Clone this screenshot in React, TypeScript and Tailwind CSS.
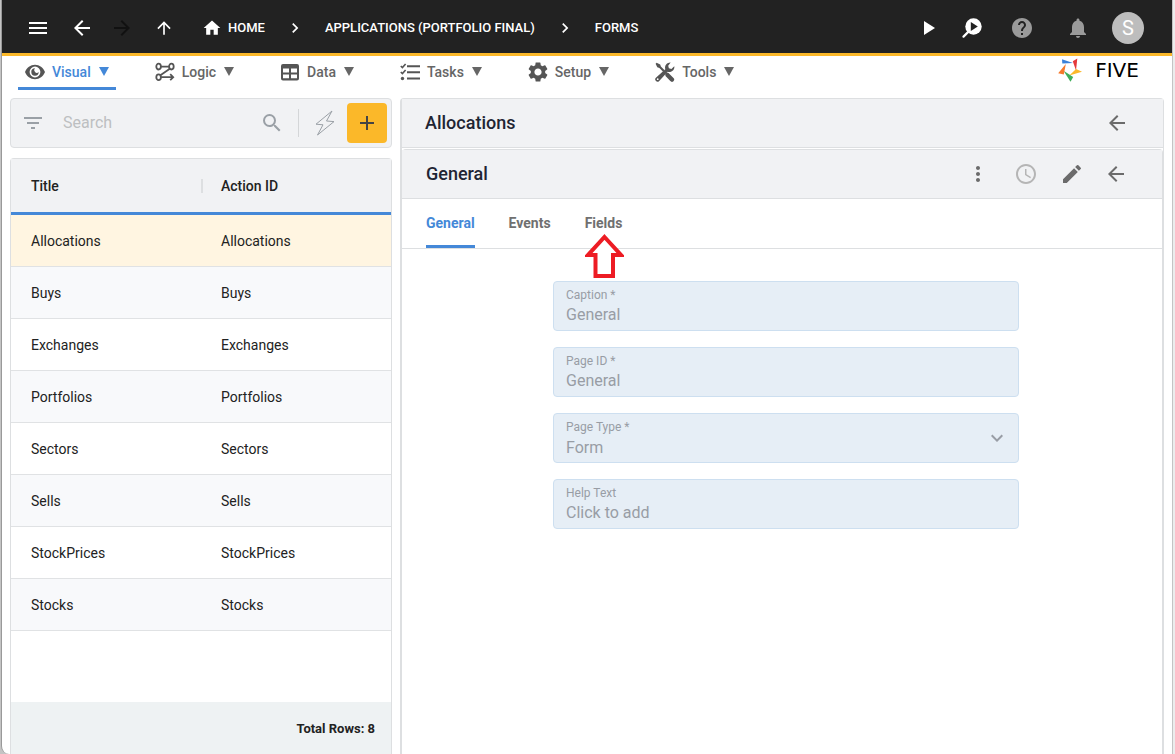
import React, { useState } from 'react';
import {
  MdMenu,
  MdArrowBack,
  MdArrowForward,
  MdArrowUpward,
  MdHome,
  MdChevronRight,
  MdPlayArrow,
  MdHelp,
  MdNotifications,
  MdFilterList,
  MdSearch,
  MdAdd,
  MdMoreVert,
  MdAccessTime,
  MdEdit,
  MdKeyboardArrowDown,
  MdSettings,
} from 'react-icons/md';

type IconProps = { className?: string };

type MenuItem = {
  label: string;
  icon: React.ReactNode;
};

type FieldProps = {
  id: string;
  label: string;
  value: string;
};

// --- Icons ---
const EyeIcon = ({ className }: IconProps) => (
  <svg viewBox="0 0 20 20" className={className} fill="currentColor" fillRule="evenodd">
    <path d="M10 2.800C5.500 2.800 1.700 5.700 0 10c1.700 4.300 5.500 7.200 10 7.200s8.300-2.900 10-7.200c-1.700-4.300-5.500-7.200-10-7.200ZM10 4.600a5.400 5.400 0 1 1 0 10.800 5.400 5.400 0 0 1 0-10.800Z" />
    <path d="M10 6.300A3.700 3.700 0 1 0 13.700 10 2 2 0 0 1 10 6.300Z" />
  </svg>
);

const LogicIcon = ({ className }: IconProps) => (
  <svg viewBox="0 0 20 20" className={className} fill="none" stroke="currentColor" strokeWidth="1.8">
    <ellipse cx="3.6" cy="4.6" rx="2.3" ry="2.9" />
    <ellipse cx="16.4" cy="4.6" rx="2.3" ry="2.9" />
    <ellipse cx="3.6" cy="15.2" rx="2.3" ry="2.9" />
    <path d="M5.9 4.6h8.2M14.8 6.8 5.4 13.2M5.9 15.2h12M15.2 12.2l3 3-3 3" />
  </svg>
);

const DataIcon = ({ className }: IconProps) => (
  <svg viewBox="0 0 20 20" className={className} fill="currentColor" fillRule="evenodd">
    <path d="M3 2h14A2 2 0 0 1 19 4v12.500a2 2 0 0 1-2 2h-14A2 2 0 0 1 1 16.500v-12.500A2 2 0 0 1 3 2ZM3 6.500v4h6v-4ZM11 6.500v4h6v-4ZM3 12.400v3.800h6v-3.800ZM11 12.400v3.800h6v-3.800Z" />
  </svg>
);

const TasksIcon = ({ className }: IconProps) => (
  <svg viewBox="0 0 20 20" className={className} fill="none" stroke="currentColor" strokeWidth="2">
    <path d="M7 4.200h13M7 10.200h13M7 16.500h13" />
    <path strokeWidth="1.600" d="m.8 4 1.600 1.600 3.200-3.600M.8 10l1.600 1.600 3.200-3.600" />
    <circle cx="2.500" cy="16.500" r="1.700" fill="currentColor" stroke="none" />
  </svg>
);

const ToolsIcon = ({ className }: IconProps) => (
  <svg viewBox="0 0 20 20" className={className} fill="currentColor">
    <path d="M1.600.8.600 1.800l1.700 3.500 2.100.7 3.700 3.700 1.500-1.500-3.700-3.700-.7-2.100Z" />
    <path d="m11.800 10.500-1.600 1.600.3 1.800 4.800 5.200a2.100 2.100 0 0 0 3.200-3.100l-5-4.900Z" />
    <path
      fillRule="evenodd"
      d="M15.600.6a5 5 0 0 0-5.300 6.600L.9 15.700a2.200 2.200 0 0 0 3.300 3.200l8.500-9.200a5 5 0 0 0 6.600-5.500l-2.900 2.800-2.500-.8-.7-2.500ZM2.700 16.300a.9.900 0 1 1 0 1.800.9.900 0 0 1 0-1.800Z"
    />
  </svg>
);

const InspectIcon = ({ className }: IconProps) => (
  <svg viewBox="0 0 20 20" className={className}>
    <path d="m1.500 18.600 6-6" stroke="currentColor" strokeWidth="2.200" strokeLinecap="round" />
    <circle cx="11.500" cy="8.500" r="8.200" fill="currentColor" />
    <path d="M8.800 4v9l7-4.500Z" fill="#222222" />
  </svg>
);

const BoltIcon = ({ className }: IconProps) => (
  <svg viewBox="0 0 20 26" className={className} fill="none" stroke="currentColor" strokeWidth="1" strokeLinejoin="round">
    <path d="M17 1 1 14.200l7 .6L2.500 25 19 11.600l-7.500-.6Z" />
  </svg>
);

const FiveMark = ({ className }: IconProps) => (
  <svg viewBox="0 0 24 24" className={className}>
    <path fill="#3b82d9" d="M4 1.200 15 5 4.300 5.600Z" />
    <path fill="#e5383b" d="m14.800 3.200 4.500-2.700L18 12.500Z" />
    <path fill="#fbb829" d="M11.300 17.500 18 11l6 2.700Z" />
    <path fill="#3fae5a" d="m5.500 12.800 9.700 6.200-2.700 4.800Z" />
    <path fill="#f5792b" d="M7.800 6 .2 15.300l5.600 1.200Z" />
  </svg>
);

const menuItems: MenuItem[] = [
  { label: 'Visual', icon: <EyeIcon className="size-5" /> },
  { label: 'Logic', icon: <LogicIcon className="size-5" /> },
  { label: 'Data', icon: <DataIcon className="size-5" /> },
  { label: 'Tasks', icon: <TasksIcon className="size-5" /> },
  { label: 'Setup', icon: <MdSettings className="size-6 shrink-0" /> },
  { label: 'Tools', icon: <ToolsIcon className="size-5" /> },
];

const forms = ['Allocations', 'Buys', 'Exchanges', 'Portfolios', 'Sectors', 'Sells', 'StockPrices', 'Stocks'];

const tabs = ['General', 'Events', 'Fields'];

// --- Top bar ---
const TopBar = () => (
  <header className="flex h-14 shrink-0 items-center border-b-3 border-[#fbb829] bg-[#222222] pt-[3px] pr-7 pl-6 text-white">
    <div className="flex items-center">
      <button aria-label="Menu"><MdMenu className="size-6" /></button>
      <button aria-label="Back" className="ml-5"><MdArrowBack className="size-6" /></button>
      <button aria-label="Forward" className="ml-4 text-[#111111]"><MdArrowForward className="size-6" /></button>
      <button aria-label="Up" className="ml-5"><MdArrowUpward className="size-5" /></button>
    </div>
    <nav aria-label="Breadcrumb" className="ml-7 flex items-center text-[13px] font-medium">
      <a href="#home" className="flex items-center gap-1.5">
        <MdHome className="size-5" />
        HOME
      </a>
      <MdChevronRight className="mx-5 size-5" />
      <a href="#applications">APPLICATIONS (PORTFOLIO FINAL)</a>
      <MdChevronRight className="mx-5 size-5" />
      <a href="#forms">FORMS</a>
    </nav>
    <div className="ml-auto flex items-center">
      <button aria-label="Run"><MdPlayArrow className="size-6" /></button>
      <button aria-label="Inspect" className="ml-[22px]"><InspectIcon className="size-5" /></button>
      <button aria-label="Help" className="ml-7 text-[#9a9a9a]"><MdHelp className="size-6" /></button>
      <button aria-label="Notifications" className="ml-8 text-[#9a9a9a]"><MdNotifications className="size-6" /></button>
      <button className="ml-[22px] size-8 rounded-full bg-[#bdbdbd] text-xl">S</button>
    </div>
  </header>
);

// --- Main menu ---
const MainMenu = () => {
  const [active, setActive] = useState('Visual');

  return (
    <div className="flex h-[42px] shrink-0 items-start justify-between pr-6 pl-4">
      <nav className="flex gap-8">
        {menuItems.map(item => (
          <button
            key={item.label}
            onClick={() => setActive(item.label)}
            className={`flex h-[34px] items-center border-b-3 px-[7px] text-sm font-medium ${active === item.label ? 'border-[#4488d8] text-[#4488d8]' : 'border-transparent text-[#666666]'}`}
          >
            <span className="mr-[7px] flex size-5 items-center justify-center text-[#555555]">{item.icon}</span>
            <span>{item.label}</span>
            <svg viewBox="0 0 10 9" className="ml-2 h-[9px] w-2.5" fill="currentColor">
              <path d="M0 0h10L5 9Z" />
            </svg>
          </button>
        ))}
      </nav>
      <a href="#five" className="flex h-7 items-center gap-1 text-black">
        <FiveMark className="size-6" />
        <span className="w-[62px] text-center font-[family-name:'DejaVu_Sans',sans-serif] text-xl leading-7">FIVE</span>
      </a>
    </div>
  );
};

// --- Forms list ---
const FormsList = () => {
  const [selected, setSelected] = useState('Allocations');

  return (
    <aside className="flex w-[382px] shrink-0 flex-col gap-2.5">
      <div className="flex h-[50px] shrink-0 items-center rounded border border-[#dddfe1] bg-[#f1f2f4] pr-1 pl-2.5 text-[#9aa0a6]">
        <button aria-label="Filter"><MdFilterList className="size-6" /></button>
        <input
          type="search"
          aria-label="Search"
          placeholder="Search"
          className="ml-[18px] min-w-0 flex-1 bg-transparent text-base outline-none placeholder:text-[#bdbfc1]"
        />
        <button aria-label="Run search"><MdSearch className="size-6" /></button>
        <span className="ml-3.5 h-7 w-px bg-[#d4d6d8]" />
        <button aria-label="Quick actions" className="ml-4"><BoltIcon className="h-[26px] w-5" /></button>
        <button aria-label="Add" className="ml-3 flex size-10 items-center justify-center rounded bg-[#fbb829] text-[#444444]">
          <MdAdd className="size-6" />
        </button>
      </div>
      <div className="flex min-h-0 flex-1 flex-col rounded-t border border-b-0 border-[#dddfe1]">
        <table className="w-full table-fixed border-separate border-spacing-0 text-left text-sm text-[#222222]">
          <thead>
            <tr className="h-14 bg-[#f1f2f4]">
              <th className="border-b-3 border-[#4488d8] px-5 font-medium">Title</th>
              <th className="relative border-b-3 border-[#4488d8] px-5 font-medium">
                <span className="absolute top-5 left-0 h-3.5 w-0.5 bg-[#dddfe1]" />
                Action ID
              </th>
            </tr>
          </thead>
          <tbody>
            {forms.map(form => (
              <tr
                key={form}
                onClick={() => setSelected(form)}
                className={`h-13 ${selected === form ? 'bg-[#fff5e1]' : 'bg-white even:bg-[#f8f9fb]'}`}
              >
                <td className="border-b border-[#e0e2e4] px-5">{form}</td>
                <td className="border-b border-[#e0e2e4] px-5">{form}</td>
              </tr>
            ))}
          </tbody>
        </table>
        <div className="mt-auto flex h-13 items-center justify-end bg-[#eef2f3] px-4 pt-0.5 text-[13px] font-bold text-[#222222]">
          Total Rows: {forms.length}
        </div>
      </div>
    </aside>
  );
};

const fieldBox = 'flex h-[50px] flex-col rounded border border-[#cddff0] bg-[#e6eef6] px-3 pt-1 text-[#989da5]';

const TextField = ({ id, label, value }: FieldProps) => (
  <div className={fieldBox}>
    <label htmlFor={id} className="text-xs leading-[18px]">{label}</label>
    <input id={id} readOnly value={value} className="h-[22px] w-full bg-transparent text-base leading-[22px] outline-none" />
  </div>
);

// --- Form detail ---
const FormDetail = () => {
  const [activeTab, setActiveTab] = useState('General');

  return (
    <main className="flex min-w-0 flex-1 flex-col rounded-t border border-b-0 border-l-2 border-[#dddfe1]">
      <div className="flex h-[49px] shrink-0 items-center justify-between border-b border-[#dddfe1] bg-[#f1f2f4] pr-[34px] pl-[23px] text-[#1f2533]">
        <h1 className="text-lg font-medium">Allocations</h1>
        <button aria-label="Back to forms" className="text-[#6b6b6b]"><MdArrowBack className="size-6" /></button>
      </div>
      <section className="mt-px flex min-h-0 flex-1 flex-col rounded-t border-t border-r border-[#dddfe1]">
        <div className="flex h-[49px] shrink-0 items-center border-b border-[#dddfe1] bg-[#f1f2f4] pr-[34px] pl-6 text-[#6b6b6b]">
          <h2 className="mr-auto text-lg font-medium text-[#1f2533]">General</h2>
          <button aria-label="More"><MdMoreVert className="size-6" /></button>
          <button aria-label="History" className="ml-6 text-[#b5b5b5]"><MdAccessTime className="size-6" /></button>
          <button aria-label="Edit" className="ml-[22px]"><MdEdit className="size-6" /></button>
          <button aria-label="Back" className="ml-5"><MdArrowBack className="size-6" /></button>
        </div>
        <div role="tablist" className="flex h-[50px] shrink-0 gap-[34px] border-b border-[#dddfe1] pl-6 text-sm font-bold">
          {tabs.map(tab => (
            <button
              key={tab}
              role="tab"
              aria-selected={activeTab === tab}
              onClick={() => setActiveTab(tab)}
              className={`relative border-b-3 pt-0.5 ${activeTab === tab ? 'border-[#4488d8] text-[#4488d8]' : 'border-transparent text-[#707070]'}`}
            >
              {tab}
              {tab === 'Fields' && (
                <svg viewBox="0 0 39 45" className="absolute top-[35px] left-0 z-10 h-[45px] w-[39px]" fill="white" stroke="#ed1c24" strokeWidth="4">
                  <path d="M19.500 3 36 21H28V42H10.500V21H3Z" />
                </svg>
              )}
            </button>
          ))}
        </div>
        <form className="ml-2 flex w-[466px] max-w-full flex-col gap-4 self-center pt-8">
          <TextField id="caption" label="Caption *" value="General" />
          <TextField id="page-id" label="Page ID *" value="General" />
          <div className={`relative ${fieldBox}`}>
            <label htmlFor="page-type" className="text-xs leading-[18px]">Page Type *</label>
            <select id="page-type" className="h-6 w-full appearance-none bg-transparent text-base leading-6 outline-none">
              <option>Form</option>
            </select>
            <MdKeyboardArrowDown className="pointer-events-none absolute top-3 right-[9px] size-6" />
          </div>
          <TextField id="help-text" label="Help Text" value="Click to add" />
        </form>
      </section>
    </main>
  );
};

const App = () => (
  <div className="h-screen min-h-[700px] overflow-hidden border-r-2 border-[#ececec] bg-[#c4c4c4] pl-px font-[Roboto,sans-serif]">
    <div className="flex h-full flex-col rounded-bl-lg border-r border-l border-r-[#c4c4c4] border-l-[#999999] bg-white">
      <TopBar />
      <MainMenu />
      <div className="flex min-h-0 flex-1 gap-2 px-2">
        <FormsList />
        <FormDetail />
      </div>
    </div>
  </div>
);

export default App;
